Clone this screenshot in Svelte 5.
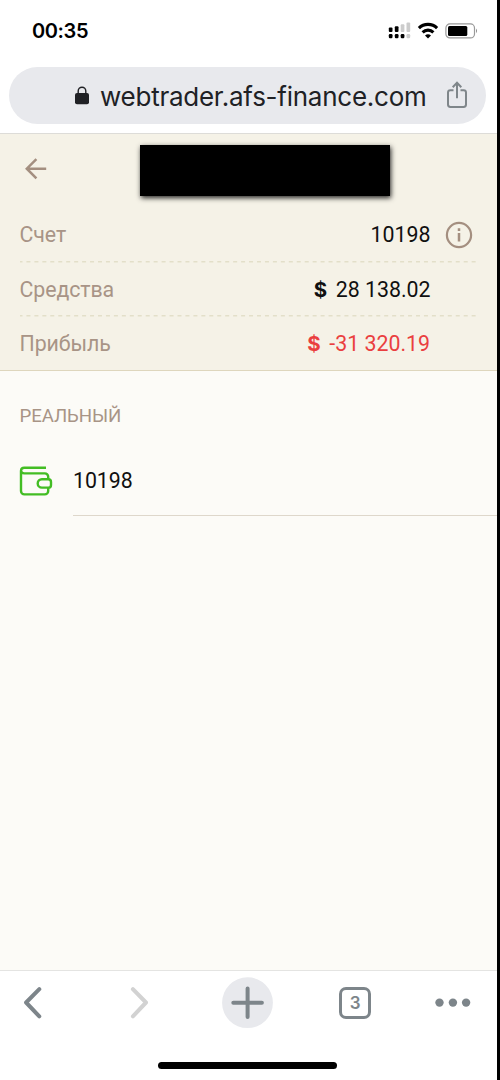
<script>
  const rows = [
    { label: 'Счет', value: '10198', info: true },
    { label: 'Средства', currency: '$', value: '28 138.02' },
    { label: 'Прибыль', currency: '$', value: '-31 320.19', negative: true }
  ];
  const signal = [
    { x: 0.8, y: 5.5, on: true, low: true },
    { x: 6.8, y: 4.2, on: true, low: true },
    { x: 12.7, y: 2.2, on: false, low: true },
    { x: 18.5, y: 0.4, on: false, low: false }
  ];
</script>

<div class="screen">
  <div class="phone">
    <header class="chrome">
      <div class="status">
        <span class="time">00:35</span>
        <div class="indicators">
          <svg width="23" height="18" viewBox="0 0 23 18">
            {#each signal as s}
              <rect x={s.x} y={s.y} width="3.7" height={10 - s.y} rx="1" fill={s.on ? '#000' : '#ccc'} />
              <rect x={s.x} y="12.1" width="3.7" height="4.2" rx="1.2" fill={s.low ? '#000' : '#ccc'} />
            {/each}
          </svg>
          <svg class="wifi" width="22" height="18" viewBox="0 0 22 18" fill="none" stroke="#000" stroke-width="3.1">
            <path d="M1.9 6.1a13 13 0 0 1 18.2 0" />
            <path d="M5.6 10.3a7.8 7.8 0 0 1 10.8 0" />
            <path d="M11 16.5 8 13.6a4.4 4.4 0 0 1 6 0z" fill="#000" stroke="none" />
          </svg>
          <svg class="battery" width="34" height="18" viewBox="0 0 34 18">
            <rect x=".9" y="1.9" width="28.6" height="14" rx="4" fill="none" stroke="#999" stroke-width="1.2" />
            <rect x="3" y="4" width="19.3" height="9.9" rx="1.5" />
            <path d="M31 6.5q2 2.3 0 4.8z" fill="#888" />
          </svg>
        </div>
      </div>
      <div class="address">
        <svg class="lock" width="14" height="19" viewBox="0 0 14 19">
          <rect y="7" width="14" height="11.2" rx="2" fill="#202125" />
          <path d="M3.2 8V5a3.8 3.8 0 0 1 7.6 0v3" fill="none" stroke="#202125" stroke-width="1.4" />
        </svg>
        <span class="url">webtrader.afs-finance.com</span>
        <svg class="share" width="22" height="28" viewBox="0 0 22 28" fill="none" stroke="#7f868a" stroke-width="2">
          <path d="M7.5 9.2H4.4Q2 9.2 2 11.6v12Q2 26 4.4 26h13.2q2.4 0 2.4-2.4v-12q0-2.4-2.4-2.4h-3.1M11 17.3V2M6.7 6.2 11 1.8l4.3 4.4" />
        </svg>
      </div>
    </header>

    <section class="account">
      <div class="title">
        <svg width="22" height="22" viewBox="0 0 22 22" fill="none" stroke="#a48f80" stroke-width="2.5">
          <path d="M21.2 10.7H2M11.4 1.1 1.8 10.7l9.6 9.6" />
        </svg>
        <div class="name"></div>
      </div>
      {#each rows as row}
        <div class="row">
          <span class="label">{row.label}</span>
          <div class="amount" class:negative={row.negative}>
            {#if row.currency}<b>{row.currency}</b>{/if}<span>{row.value}</span>
          </div>
          <div class="side">
            {#if row.info}
              <svg width="28" height="28" viewBox="0 0 28 28">
                <circle cx="14" cy="14" r="12.1" fill="none" stroke="#a48f80" stroke-width="2.2" />
                <path d="M14 12v8.5M14 7.2v2.7" stroke="#a48f80" stroke-width="2.5" />
              </svg>
            {/if}
          </div>
          <svg class="dash" width="456" height="2"><path d="M0 .7H456" stroke="#e3dfc9" stroke-width="1.4" stroke-dasharray="4 3.95" stroke-dashoffset="1.5" /></svg>
        </div>
      {/each}
    </section>

    <main>
      <h2>РЕАЛЬНЫЙ</h2>
      <div class="wallet">
        <svg width="34" height="32" viewBox="0 0 34 32" fill="none" stroke="#43bd24" stroke-width="2.4">
          <path d="M27 2.7H5.2A3.2 3.2 0 0 0 2 5.7V26a3.4 3.4 0 0 0 3.4 3.4h20.4a3.4 3.4 0 0 0 3.4-3.4v-3.2M2 5.5Q2.3 8.4 5.2 8.4h20.6a3.4 3.4 0 0 1 3.4 3.4v2.9" />
          <path d="M22.9 14.2h6.4a2.7 2.7 0 0 1 2.7 2.7v3a2.7 2.7 0 0 1-2.7 2.7h-6.4a4.2 4.2 0 0 1 0-8.4z" />
        </svg>
        <div class="number">10198</div>
      </div>
    </main>

    <footer>
      <nav>
        <svg width="50" height="52" viewBox="0 0 50 52"><path d="M30.3 12.2 17.1 25.5l13.2 13.8" /></svg>
        <svg class="off" width="50" height="52" viewBox="0 0 50 52"><path d="M17.9 12.2 31 25.5 17.9 39.3" /></svg>
        <svg class="add" width="52" height="52" viewBox="0 0 52 52">
          <circle cx="26.5" cy="25.7" r="25.4" fill="#e8e9ed" />
          <path d="M12.3 25.7h28.6M26.6 11.4V40" />
        </svg>
        <div class="tabs">3</div>
        <svg class="more" width="50" height="52" viewBox="0 0 50 52" fill="#7d858a">
          <circle cx="11.5" cy="25.6" r="4.2" /><circle cx="24.9" cy="25.6" r="4.2" /><circle cx="38.1" cy="25.6" r="4.2" />
        </svg>
      </nav>
      <div class="home"></div>
    </footer>
  </div>
</div>

<style>
  :global(body) { margin: 0; }
  svg { display: block; flex: none; }
  .screen { width: 500px; height: 1080px; background: #000; }
  .phone { width: 497px; height: 1080px; display: flex; flex-direction: column; background: #fff; font-family: Roboto, sans-serif; font-size: 21.33px; letter-spacing: -.08px; color: #101010; }
  .chrome { height: 133px; flex: none; border-bottom: 1px solid #dddcd8; box-sizing: content-box; }
  .status { height: 67px; display: flex; justify-content: space-between; padding: 0 18.5px 0 32px; }
  .time { font: 600 20px/62px Inter, sans-serif; letter-spacing: -.4px; color: #000; }
  .indicators { display: flex; padding-top: 21.5px; }
  .wifi { margin-left: 5.5px; }
  .battery { margin-left: 6px; }
  .address { height: 57px; margin: 0 11px 0 9px; border-radius: 29px; background: #e8e9ed; display: flex; align-items: center; }
  .lock { margin-left: 65.5px; }
  .url { width: 328px; margin-left: 11.5px; padding-top: 2px; font: 400 26px/55px Inter, sans-serif; letter-spacing: -.25px; color: #202125; white-space: nowrap; }
  .share { margin-left: 18px; margin-bottom: 2px; }
  .account { height: 236px; flex: none; background: #f5f2e7; border-bottom: 1px solid #ded6bd; }
  .title { height: 74px; padding: 11px 0 0 25px; box-sizing: border-box; display: flex; }
  .title svg { margin-top: 13px; }
  .name { width: 250px; height: 51px; margin-left: 93px; background: #000; box-shadow: 1px 2px 5px rgba(0,0,0,.85); }
  .row { height: 54.5px; padding: 0 22px 0 19.5px; display: grid; grid-template-columns: 1fr auto 45px; grid-template-rows: 52.5px 2px; align-items: center; }
  .row:last-child .dash { display: none; }
  .label { color: #a89486; padding-top: 1px; }
  .amount { display: flex; align-items: baseline; gap: 8.5px; padding-top: 1px; white-space: nowrap; letter-spacing: 0; }
  .amount b { font-family: Inter, sans-serif; font-weight: 700; font-size: 20.5px; line-height: 25px; }
  .side { padding: 1px 0 0 14.5px; }
  .dash { grid-column: 1 / -1; }
  .negative { color: #ea3f3f; }
  main { flex: 1; background: #fcfbf7; padding-left: 19.5px; }
  h2 { margin: 32px 0 0; padding-top: 1px; font-weight: 400; font-size: 18.67px; line-height: 25px; color: #a89486; }
  .wallet { display: flex; margin-top: 16px; }
  .wallet svg { margin: 19.5px 0 0 -.5px; }
  .number { flex: 1; margin-left: 20px; height: 70px; line-height: 72px; border-bottom: 1px solid #ded7cb; }
  footer { height: 109px; flex: none; border-top: 1px solid #e4e4e2; }
  nav { display: flex; padding: 6px 0 0 9px; height: 52px; }
  nav path { fill: none; stroke: #7d858a; stroke-width: 4; stroke-linecap: round; stroke-linejoin: round; }
  .off { margin-left: 56px; }
  .off path { stroke: #d2d2d2; }
  .add { margin-left: 56px; }
  .tabs { box-sizing: border-box; width: 32px; height: 32px; margin: 9.5px 0 0 66px; border: 3px solid #7d858a; border-radius: 7px; text-align: center; font: 600 17px/27px Inter, sans-serif; color: #7d858a; }
  .more { margin-left: 56.5px; }
  .home { width: 179px; height: 7px; margin: 33px auto 0 158px; background: #000; border-radius: 4px; }
</style>
